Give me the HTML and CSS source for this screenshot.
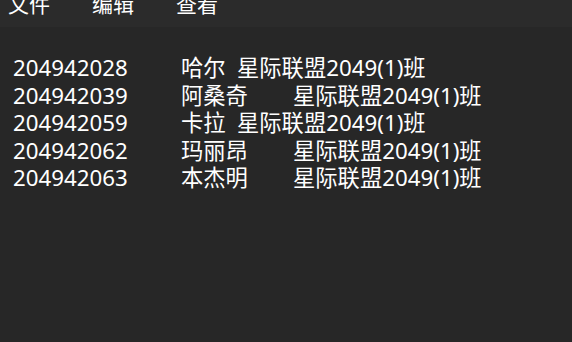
FILE: index.html
```html
<!DOCTYPE html>
<html lang="zh-CN">

<head>
    <meta charset="UTF-8">
    <title>学生名单 - 记事本</title>
    <link rel="stylesheet" href="styles.css">
</head>

<body>
    <div class="menu-bar">
        <span class="menu-item">文件</span>
        <span class="menu-item">编辑</span>
        <span class="menu-item">查看</span>
    </div>

    <div class="editor">
<pre class="text-area">204942028	哈尔	星际联盟2049(1)班
204942039	阿桑奇	星际联盟2049(1)班
204942059	卡拉	星际联盟2049(1)班
204942062	玛丽昂	星际联盟2049(1)班
204942063	本杰明	星际联盟2049(1)班</pre>
    </div>
</body>

</html>
```

FILE: styles.css
```css
body {
    margin: 0;
    background: #272727;
    color: #ffffff;
    font-family: "Noto Sans", "Noto Sans CJK SC", sans-serif;
    height: 342px;
    overflow: hidden;
}

.menu-bar {
    display: flex;
    height: 27px;
    background: #2b2b2b;
    overflow: hidden;
}

.menu-item {
    font-size: 21px;
    line-height: 22px;
    margin-top: -7px;
    padding: 0 21px 0 8px;
    width: 55px;
}

.editor {
    padding: 27px 0 0 13px;
}

.text-area {
    margin: 0;
    font-family: "Noto Sans", "Noto Sans CJK SC", sans-serif;
    font-size: 22.3px;
    line-height: 27.5px;
    tab-size: 56px;
    white-space: pre;
}
```
